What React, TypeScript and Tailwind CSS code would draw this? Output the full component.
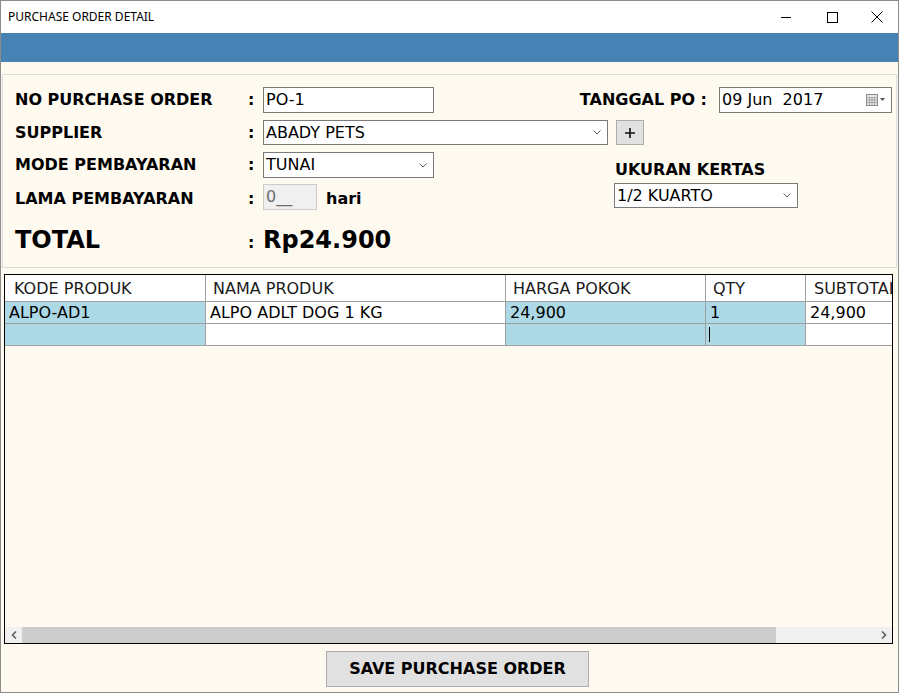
import { ReactNode } from "react";

function Chevron() {
  return (
    <svg width="8" height="5" viewBox="0 0 8 5" className="shrink-0">
      <path d="M0.5 0.5 L4 4 L7.5 0.5" fill="none" stroke="#606060" strokeWidth="1" />
    </svg>
  );
}

function Select({ value, className }: { value: string; className: string }) {
  return (
    <div
      className={`flex items-center justify-between border border-[#7a7a7a] bg-white pl-[2px] pr-[6px] text-[16px] leading-none text-black ${className}`}
    >
      <span>{value}</span>
      <Chevron />
    </div>
  );
}

function Label({ children, className = "" }: { children: ReactNode; className?: string }) {
  return <div className={`w-[233px] shrink-0 text-[16px] font-bold text-black ${className}`}>{children}</div>;
}

function Colon({ className = "" }: { className?: string }) {
  return <div className={`w-[15px] shrink-0 text-[16px] font-bold text-black ${className}`}>:</div>;
}

function App() {
  return (
    <div className="w-[901px] h-[694px] bg-white font-['DejaVu_Sans',sans-serif]">
      <div className="w-[899px] h-[693px] border border-[#8c8c8c] flex flex-col bg-[#fffaf0]">
        {/* title bar */}
        <div className="h-[32px] shrink-0 bg-white flex items-center">
          <span className="ml-[7px] font-['Noto_Sans',sans-serif] text-[12px] text-black">
            PURCHASE ORDER DETAIL
          </span>
          <div className="ml-auto flex items-center">
            <svg width="12" height="12" viewBox="0 0 12 12" className="mr-[34px]">
              <path d="M1 6.5 H11" stroke="#000" strokeWidth="1" />
            </svg>
            <svg width="12" height="12" viewBox="0 0 12 12" className="mr-[33px]">
              <rect x="1.5" y="1.5" width="10" height="10" fill="none" stroke="#000" strokeWidth="1" />
            </svg>
            <svg width="12" height="12" viewBox="0 0 12 12" className="mr-[15px]">
              <path d="M0.5 0.5 L11.5 11.5 M11.5 0.5 L0.5 11.5" stroke="#000" strokeWidth="1" />
            </svg>
          </div>
        </div>
        <div className="h-[29px] shrink-0 bg-[#4682b4]" />

        {/* header panel */}
        <div className="ml-[1px] mt-[12px] w-[895px] h-[194px] shrink-0 border border-[#dcdcdc] pl-[12px] pr-[4px] pt-[12px]">
          <div className="flex items-center h-[26px]">
            <Label>NO PURCHASE ORDER</Label>
            <Colon />
            <div className="w-[171px] h-[26px] border border-[#7a7a7a] bg-white pl-[2px] flex items-center text-[16px] text-black">
              PO-1
            </div>
            <div className="ml-auto flex items-center">
              <span className="text-[16px] font-bold text-black">TANGGAL PO :</span>
              <div className="ml-[12px] w-[173px] h-[26px] border border-[#7a7a7a] bg-white pl-[2px] pr-[5px] flex items-center justify-between text-[16px] text-black">
                <span className="whitespace-pre">09 Jun  2017</span>
                <svg width="20" height="12" viewBox="0 0 20 12">
                  <rect x="0.5" y="0.5" width="11" height="11" fill="#e8e8e8" stroke="#8a8a8a" />
                  <path d="M0.5 3.5 H11.5 M3.5 3.5 V11.5 M6 3.5 V11.5 M8.5 3.5 V11.5 M0.5 6 H11.5 M0.5 8.5 H11.5" stroke="#a8a8a8" strokeWidth="1" />
                  <path d="M14 4 L19 4 L16.5 7 Z" fill="#555" />
                </svg>
              </div>
            </div>
          </div>

          <div className="flex items-center h-[25px] mt-[7px]">
            <Label>SUPPLIER</Label>
            <Colon />
            <Select value="ABADY PETS" className="w-[345px] h-[25px]" />
            <div className="ml-[8px] w-[28px] h-[25px] border border-[#adadad] bg-[#e1e1e1] flex items-center justify-center">
              <svg width="12" height="12" viewBox="0 0 12 12">
                <path d="M6 1 V11 M1 6 H11" stroke="#111" strokeWidth="1.6" />
              </svg>
            </div>
          </div>

          <div className="flex mt-[7px]">
            <div className="flex flex-col">
              <div className="flex items-center h-[26px]">
                <Label>MODE PEMBAYARAN</Label>
                <Colon />
                <Select value="TUNAI" className="w-[171px] h-[26px]" />
              </div>
              <div className="flex items-center h-[26px] mt-[6px]">
                <Label className="pt-[3px]">LAMA PEMBAYARAN</Label>
                <Colon className="pt-[3px]" />
                <div className="w-[54px] h-[26px] border border-[#cccccc] bg-[#f0f0f0] pl-[2px] flex items-center text-[16px] text-[#6d6d6d]">
                  0__
                </div>
                <span className="ml-[9px] pt-[3px] text-[16px] font-bold text-black">hari</span>
              </div>
            </div>
            <div className="ml-[180px] pt-[8px] flex flex-col">
              <div className="text-[16px] leading-[20px] font-bold text-black pl-[1px]">UKURAN KERTAS</div>
              <Select value="1/2 KUARTO" className="mt-[3px] w-[184px] h-[25px]" />
            </div>
          </div>

          <div className="flex items-baseline mt-[12px] h-[32px]">
            <div className="w-[233px] shrink-0 text-[24px] font-bold text-black">TOTAL</div>
            <Colon />
            <div className="text-[24px] font-bold text-black">Rp24.900</div>
          </div>
        </div>

        {/* grid */}
        <div className="ml-[3px] mt-[6px] w-[889px] h-[370px] shrink-0 border border-black flex flex-col">
          <div className="flex-1 overflow-hidden text-[16px] text-black">
            <div className="flex h-[27px] bg-white border-b border-[#a0a0a0] text-[#1a1a1a]">
              <div className="w-[201px] shrink-0 border-r border-[#a0a0a0] pl-[9px] pt-[2px] flex items-center">KODE PRODUK</div>
              <div className="w-[300px] shrink-0 border-r border-[#a0a0a0] pl-[7px] pt-[2px] flex items-center">NAMA PRODUK</div>
              <div className="w-[200px] shrink-0 border-r border-[#a0a0a0] pl-[7px] pt-[2px] flex items-center">HARGA POKOK</div>
              <div className="w-[100px] shrink-0 border-r border-[#a0a0a0] pl-[7px] pt-[2px] flex items-center">QTY</div>
              <div className="flex-1 pl-[8px] pt-[2px] flex items-center whitespace-nowrap overflow-hidden">SUBTOTAL</div>
            </div>
            <div className="flex h-[22px] border-b border-[#a0a0a0]">
              <div className="w-[201px] shrink-0 bg-[#add8e6] border-r border-[#a0a0a0] pl-[4px] pt-[1px] flex items-center">ALPO-AD1</div>
              <div className="w-[300px] shrink-0 bg-white border-r border-[#a0a0a0] pl-[4px] pt-[1px] flex items-center">ALPO ADLT DOG 1 KG</div>
              <div className="w-[200px] shrink-0 bg-[#add8e6] border-r border-[#a0a0a0] pl-[4px] pt-[1px] flex items-center">24,900</div>
              <div className="w-[100px] shrink-0 bg-[#add8e6] border-r border-[#a0a0a0] pl-[4px] pt-[1px] flex items-center">1</div>
              <div className="flex-1 bg-white pl-[4px] pt-[1px] flex items-center">24,900</div>
            </div>
            <div className="flex h-[22px] border-b border-[#a0a0a0]">
              <div className="w-[201px] shrink-0 bg-[#add8e6] border-r border-[#a0a0a0]" />
              <div className="w-[300px] shrink-0 bg-white border-r border-[#a0a0a0]" />
              <div className="w-[200px] shrink-0 bg-[#add8e6] border-r border-[#a0a0a0]" />
              <div className="w-[100px] shrink-0 bg-[#add8e6] border-r border-[#a0a0a0] pl-[3px] flex items-center">
                <div className="w-[1px] h-[15px] bg-black" />
              </div>
              <div className="flex-1 bg-white" />
            </div>
          </div>
          <div className="h-[16px] shrink-0 flex bg-[#f0f0f0]">
            <div className="w-[17px] flex items-center justify-center">
              <svg width="6" height="8" viewBox="0 0 6 8">
                <path d="M5 0.5 L1.5 4 L5 7.5" fill="none" stroke="#606060" strokeWidth="1.6" />
              </svg>
            </div>
            <div className="w-[754px] bg-[#cdcdcd]" />
            <div className="flex-1" />
            <div className="w-[17px] flex items-center justify-center">
              <svg width="6" height="8" viewBox="0 0 6 8">
                <path d="M1 0.5 L4.5 4 L1 7.5" fill="none" stroke="#606060" strokeWidth="1.6" />
              </svg>
            </div>
          </div>
        </div>

        <div className="flex mt-[7px] pl-[325px]">
          <div className="w-[263px] h-[36px] border border-[#adadad] bg-[#e1e1e1] flex items-center justify-center text-[16px] font-bold text-black">
            SAVE PURCHASE ORDER
          </div>
        </div>
      </div>
    </div>
  );
}

export default App;
